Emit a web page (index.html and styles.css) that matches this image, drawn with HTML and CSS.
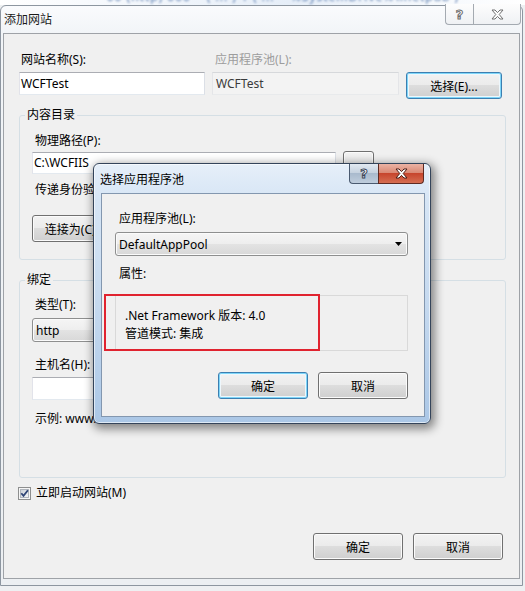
FILE: index.html
```html
<!DOCTYPE html>
<html lang="zh-CN">
<head>
<meta charset="utf-8">
<title>添加网站</title>
<link rel="stylesheet" href="styles.css">
</head>
<body>
<div class="bgstrip"><span>* 00 (http) 000 * ( ... ) 1 ( ...&nbsp;&nbsp;&nbsp; %SystemDrive%\inetpub )</span></div>
<div class="window">
  <div class="titlebar">
    <span class="title">添加网站</span>
    <div class="caps">
      <span class="cap cap-help">?</span>
      <span class="cap cap-close"><svg width="13" height="11" viewBox="0 0 13 11"><path d="M1 1H4L6.5 3.6L9 1H12L8.2 5.5L12 10H9L6.5 7.4L4 10H1L4.8 5.5Z" fill="#fff" stroke="#707070" stroke-width="1" stroke-linejoin="round"/></svg></span>
    </div>
  </div>
  <div class="client">
    <div class="toprow">
      <div class="lbl ml2">网站名称(S):</div>
      <div class="lbl dis ml3">应用程序池(L):</div>
      <div></div>
      <div class="tb">WCFTest</div>
      <div class="tb tb-dis">WCFTest</div>
      <button class="btn btn-focus">选择(E)...</button>
    </div>

    <fieldset class="group g1">
      <legend>内容目录</legend>
      <div class="lbl">物理路径(P):</div>
      <div class="pathrow">
        <div class="tb w-path">C:\WCFIIS</div>
        <button class="btn btn-browse" aria-label="浏览"></button>
      </div>
      <div class="lbl mt7">传递身份验证:</div>
      <div class="btnrow">
        <button class="btn btn-conn">连接为(C)...</button>
      </div>
    </fieldset>

    <fieldset class="group g2">
      <legend>绑定</legend>
      <div class="lbl">类型(T):</div>
      <div class="combo combo-http"><span>http</span><svg width="7" height="4" viewBox="0 0 7 4"><path d="M0 0H7L3.5 4Z" fill="#000"/></svg></div>
      <div class="lbl mt15">主机名(H):</div>
      <div class="tb tb-host"></div>
      <div class="lbl mt11">示例: www.contoso.com</div>
    </fieldset>

    <div class="checkrow">
      <svg class="chk" width="13" height="13" viewBox="0 0 13 13">
        <defs><linearGradient id="cg" x1="0" y1="0" x2="1" y2="1"><stop offset="0" stop-color="#c9ced6"/><stop offset="1" stop-color="#f7f8f9"/></linearGradient></defs>
        <rect x="0.5" y="0.5" width="12" height="12" fill="#f6f6f6" stroke="#8e8f8f"/>
        <rect x="2.5" y="2.5" width="8" height="8" fill="url(#cg)" stroke="#b0b5bc"/>
        <path d="M3.3 6.2L5.5 8.9L9.9 3.2" fill="none" stroke="#2f4576" stroke-width="1.8"/>
      </svg>
      <span>立即启动网站(M)</span>
    </div>

    <div class="footer">
      <button class="btn">确定</button>
      <button class="btn">取消</button>
    </div>
  </div>
</div>

<div class="modal">
  <div class="m-title">选择应用程序池</div>
  <div class="m-caps">
    <span class="mcap mcap-help">?</span>
    <span class="mcap mcap-close"><svg width="13" height="11" viewBox="0 0 13 11"><path d="M1 1H4L6.5 3.6L9 1H12L8.2 5.5L12 10H9L6.5 7.4L4 10H1L4.8 5.5Z" fill="#fff" stroke="#4a1d16" stroke-width="1" stroke-linejoin="round"/></svg></span>
  </div>
  <div class="m-client">
    <div class="lbl ml4">应用程序池(L):</div>
    <div class="combo m-combo"><span>DefaultAppPool</span><svg width="7" height="4" viewBox="0 0 7 4"><path d="M0 0H7L3.5 4Z" fill="#000"/></svg></div>
    <div class="lbl ml4 mt10">属性:</div>
    <div class="props">
      <div>.Net Framework 版本: 4.0</div>
      <div>管道模式: 集成</div>
    </div>
    <div class="m-btns">
      <button class="btn btn-focus">确定</button>
      <button class="btn">取消</button>
    </div>
    <div class="redbox"></div>
  </div>
</div>
</body>
</html>
```

FILE: styles.css
```css
* { box-sizing: border-box; }
html, body { margin: 0; padding: 0; }
body {
  width: 525px;
  height: 591px;
  overflow: hidden;
  position: relative;
  background: #eef0f2;
  font-family: "Noto Sans", "Noto Sans CJK SC", sans-serif;
  font-size: 12px;
  color: #000;
}

.bgstrip {
  height: 5px;
  overflow: hidden;
  background: linear-gradient(90deg, #ffffff, #e6eef8 55%, #ffffff);
}
.bgstrip span {
  display: block;
  margin-top: -9px;
  padding-left: 95px;
  line-height: 12px;
  color: #5b7db0;
  white-space: nowrap;
  letter-spacing: 1px;
  filter: blur(0.8px);
}

.window {
  width: 523px;
  height: 581px;
  border: 1px solid #8d96a0;
  border-radius: 6px 6px 0 0;
  background: linear-gradient(#fafbfd, #f1f4f7 30px, #eceff2);
  display: flex;
  flex-direction: column;
  position: relative;
}
.titlebar {
  flex: none;
  height: 27px;
  line-height: 27px;
  padding-left: 3px;
  position: relative;
}
.title { color: #1a1a1a; }
.caps {
  position: absolute;
  right: 1px;
  top: -2px;
  display: flex;
}
.cap {
  height: 21px;
  border: 1px solid #a4aab1;
  border-top: none;
  background: linear-gradient(#fdfdfd, #eff1f4);
  display: flex;
  align-items: center;
  justify-content: center;
  line-height: 1;
}
.cap-help {
  width: 28px;
  border-right: none;
  border-radius: 0 0 0 4px;
  font-family: "DejaVu Sans", sans-serif;
  font-weight: bold;
  font-size: 13px;
  color: #fff;
  -webkit-text-stroke: 1px #6e6e6e;
}
.cap-close {
  width: 48px;
  border-radius: 0 0 4px 0;
}

.client {
  flex: 1;
  margin: 0 2px 6px 2px;
  border: 1px solid #9ea2a7;
  background: #f0f0f0;
  padding: 18px 16px 18px 15px;
  display: flex;
  flex-direction: column;
}

.toprow {
  display: grid;
  grid-template-columns: 186px 187px 96px;
  grid-template-rows: 16px 27px;
  column-gap: 7px;
  row-gap: 4px;
  align-items: start;
}
.lbl { line-height: 16px; white-space: nowrap; }
.dis { color: #9d9d9d; }
.ml2 { margin-left: 2px; }
.ml3 { margin-left: 3px; }
.ml4 { margin-left: 4px; }
.mt7 { margin-top: 7px; }
.mt10 { margin-top: 10px; }
.mt11 { margin-top: 11px; }
.mt15 { margin-top: 15px; }

.tb {
  height: 23px;
  border: 1px solid;
  border-color: #abadb3 #dbdfe6 #e3e9ef #e2e3ea;
  background: #fff;
  line-height: 21px;
  padding-left: 1px;
  white-space: nowrap;
  overflow: hidden;
}
.tb-dis {
  background: #f3f3f3;
  border-color: #d6d8db #e4e5e8 #e8eaec #e4e5e8;
  color: #3a3a3a;
  padding-left: 3px;
}

.btn {
  font: inherit;
  color: #000;
  height: 27px;
  margin: 0;
  padding: 0;
  border: 1px solid #707070;
  border-radius: 3px;
  background: linear-gradient(#f2f2f2 0%, #ebebeb 49%, #dddddd 50%, #cfcfcf 100%);
  box-shadow: inset 0 0 0 1px #fbfbfb;
  white-space: nowrap;
}
.btn-focus {
  border-color: #3c7fb1;
  box-shadow: inset 0 0 0 1px #7ed6f9, inset 0 0 0 2px #eef7fc;
}

.group {
  margin: 0;
  width: 487px;
  min-width: 0;
  border: 1px solid #d5dfe5;
  border-radius: 3px;
  padding: 10px 12px 17px 12px;
}
.group legend {
  padding: 0 2px;
  margin-left: -7px;
  line-height: 16px;
}
.group > .lbl { margin-left: 3px; }
.g1 { margin-top: 8px; }
.g2 { margin-top: 12px; padding-top: 9px; padding-bottom: 50px; }

.pathrow {
  display: flex;
  align-items: center;
  gap: 7px;
  margin-top: 2px;
}
.w-path { width: 304px; height: 22px; line-height: 20px; }
.btn-browse { width: 31px; height: 24px; }
.btnrow { display: flex; gap: 8px; margin-top: 17px; }
.btn-conn { width: 86px; }

.combo {
  height: 24px;
  border: 1px solid #8e8f8f;
  border-radius: 3px;
  background: linear-gradient(#f5f5f5 0%, #eeeeee 49%, #e3e3e3 50%, #d8d8d8 100%);
  box-shadow: inset 0 0 0 1px #fbfbfb;
  display: flex;
  align-items: center;
  justify-content: space-between;
  padding: 0 5px 0 3px;
}
.combo-http { width: 110px; margin-top: 5px; }
.tb-host { width: 380px; margin-top: 4px; }

.checkrow {
  display: flex;
  align-items: center;
  gap: 5px;
  margin-top: 7px;
  line-height: 16px;
}
.chk { margin-left: -1px; flex: none; }

.footer {
  margin-top: auto;
  display: flex;
  justify-content: flex-end;
  gap: 10px;
}
.footer .btn { width: 90px; }

/* modal dialog */
.modal {
  position: absolute;
  left: 93px;
  top: 163px;
  width: 338px;
  height: 261px;
  border: 1px solid #34445a;
  border-radius: 6px;
  background: linear-gradient(180deg, #e6eff9 0%, #d6e5f5 14%, #c5d9ef 55%, #abc7e6 100%);
  box-shadow: 2px 3px 10px 2px rgba(0, 0, 0, 0.45), inset 0 0 0 1px rgba(255, 255, 255, 0.6);
  display: flex;
  flex-direction: column;
}
.m-title {
  flex: none;
  height: 29px;
  padding: 2px 0 0 6px;
  line-height: 27px;
}
.m-caps {
  position: absolute;
  right: 6px;
  top: 0;
  display: flex;
}
.mcap {
  height: 20px;
  border: 1px solid #4a5a70;
  border-top: none;
  display: flex;
  align-items: center;
  justify-content: center;
  line-height: 1;
}
.mcap-help {
  width: 29px;
  border-right: none;
  border-radius: 0 0 0 4px;
  background: linear-gradient(#e2e9f1 0%, #c6d2df 45%, #a9bacd 50%, #bfcddc 100%);
  font-family: "DejaVu Sans", sans-serif;
  font-weight: bold;
  font-size: 13px;
  color: #fff;
  -webkit-text-stroke: 1px #3c4759;
}
.mcap-close {
  width: 46px;
  border-color: #5e2a22;
  border-radius: 0 0 4px 0;
  background: linear-gradient(#ebb3a4 0%, #da8a76 45%, #c7452d 50%, #d56e52 100%);
}
.m-client {
  flex: 1;
  margin: 0 5px 6px 7px;
  border: 1px solid #8397af;
  background: #f0f0f0;
  padding: 17px 16px 17px 13px;
  position: relative;
  display: flex;
  flex-direction: column;
}
.m-combo { margin-top: 5px; }
.props {
  margin-top: 13px;
  height: 56px;
  border: 1px solid #d9d9d9;
  padding: 11px 9px 0 9px;
  line-height: 18px;
  white-space: nowrap;
}
.m-btns {
  margin-top: 21px;
  display: flex;
  justify-content: flex-end;
  gap: 10px;
}
.m-btns .btn { width: 90px; }
.redbox {
  position: absolute;
  left: 2px;
  top: 100px;
  width: 216px;
  height: 57px;
  border: 2px solid #e0232f;
}
```
